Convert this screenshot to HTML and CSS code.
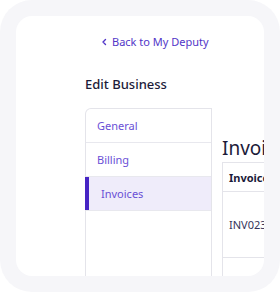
FILE: index.html
```html
<!DOCTYPE html>
<html lang="en">

<head>
  <meta charset="UTF-8" />
  <meta name="viewport" content="width=device-width, initial-scale=1.0" />
  <title>Edit Business</title>
  <link rel="stylesheet" href="styles.css">
</head>

<body>
  <div class="frame">
    <div class="card">
      <a class="back-link" href="#">
        <svg width="8" height="8" viewBox="0 0 8 8"><path d="M5.5 1.5 L3 4 L5.5 6.5" fill="none" stroke="currentColor" stroke-width="1.4" stroke-linecap="round" stroke-linejoin="round"/></svg>
        Back to My Deputy
      </a>

      <h1 class="page-title">Edit Business</h1>

      <div class="layout">
        <nav class="sidebar">
          <a class="nav-item" href="#">General</a>
          <a class="nav-item" href="#">Billing</a>
          <a class="nav-item active" href="#">Invoices</a>
        </nav>

        <section class="content">
          <h2 class="section-title">Invoices</h2>
          <table class="invoice-table">
            <thead>
              <tr><th>Invoice</th><th>Date</th><th>Amount</th></tr>
            </thead>
            <tbody>
              <tr><td>INV0234</td><td>01/03/2024</td><td>$120.00</td></tr>
              <tr><td>INV0233</td><td>01/02/2024</td><td>$120.00</td></tr>
            </tbody>
          </table>
        </section>
      </div>
    </div>
  </div>
</body>

</html>
```

FILE: styles.css
```css
* {
  margin: 0;
  padding: 0;
  box-sizing: border-box;
}

html, body {
  width: 100vw;
  height: 100vh;
  overflow: hidden;
  background: #fff;
  font-family: "Noto Sans", "Open Sans", sans-serif;
}

.frame {
  width: 280px;
  height: 292px;
  padding: 16px;
  background: #f6f6f9;
  border-radius: 32px;
}

.card {
  height: 260px;
  background: #fff;
  border-radius: 16px;
  overflow: hidden;
  padding: 18px 0 0 69px;
}

.back-link {
  display: flex;
  align-items: center;
  gap: 4px;
  margin-left: 15px;
  font-size: 11px;
  line-height: 16px;
  color: #5236c8;
  text-decoration: none;
}

.page-title {
  margin-top: 25px;
  font-size: 13px;
  line-height: 18px;
  font-weight: 500;
  color: #1c1b3a;
}

.layout {
  display: flex;
  margin-top: 15px;
  width: 300px;
  height: 200px;
}

.sidebar {
  flex: 0 0 127px;
  display: flex;
  flex-direction: column;
  border: 1px solid #e4e4ea;
  border-bottom: none;
  border-top-left-radius: 6px;
}

.nav-item {
  position: relative;
  height: 34px;
  line-height: 33px;
  padding-left: 11px;
  font-size: 11px;
  color: #6a4fd6;
  text-decoration: none;
  border-bottom: 1px solid #e8e8ee;
}

.nav-item.active {
  padding-left: 15px;
  background: #efecfa;
}

.nav-item.active::before {
  content: "";
  position: absolute;
  left: -1px;
  top: 0;
  bottom: 0;
  width: 4px;
  background: #4624c4;
}

.content {
  padding-left: 10px;
}

.section-title {
  margin-top: 28px;
  font-size: 19px;
  line-height: 25px;
  font-weight: 400;
  color: #1c1b3a;
  white-space: nowrap;
}

.invoice-table {
  margin-top: 1px;
  border-collapse: collapse;
  border: 1px solid #e4e4ea;
  font-size: 11px;
  color: #35345a;
  white-space: nowrap;
}

.invoice-table th {
  height: 29px;
  padding: 0 6px;
  text-align: left;
  font-weight: 700;
  color: #1c1b3a;
  border-bottom: 1px solid #e4e4ea;
}

.invoice-table td {
  height: 66px;
  padding: 0 6px;
  border-bottom: 1px solid #e4e4ea;
}
```
